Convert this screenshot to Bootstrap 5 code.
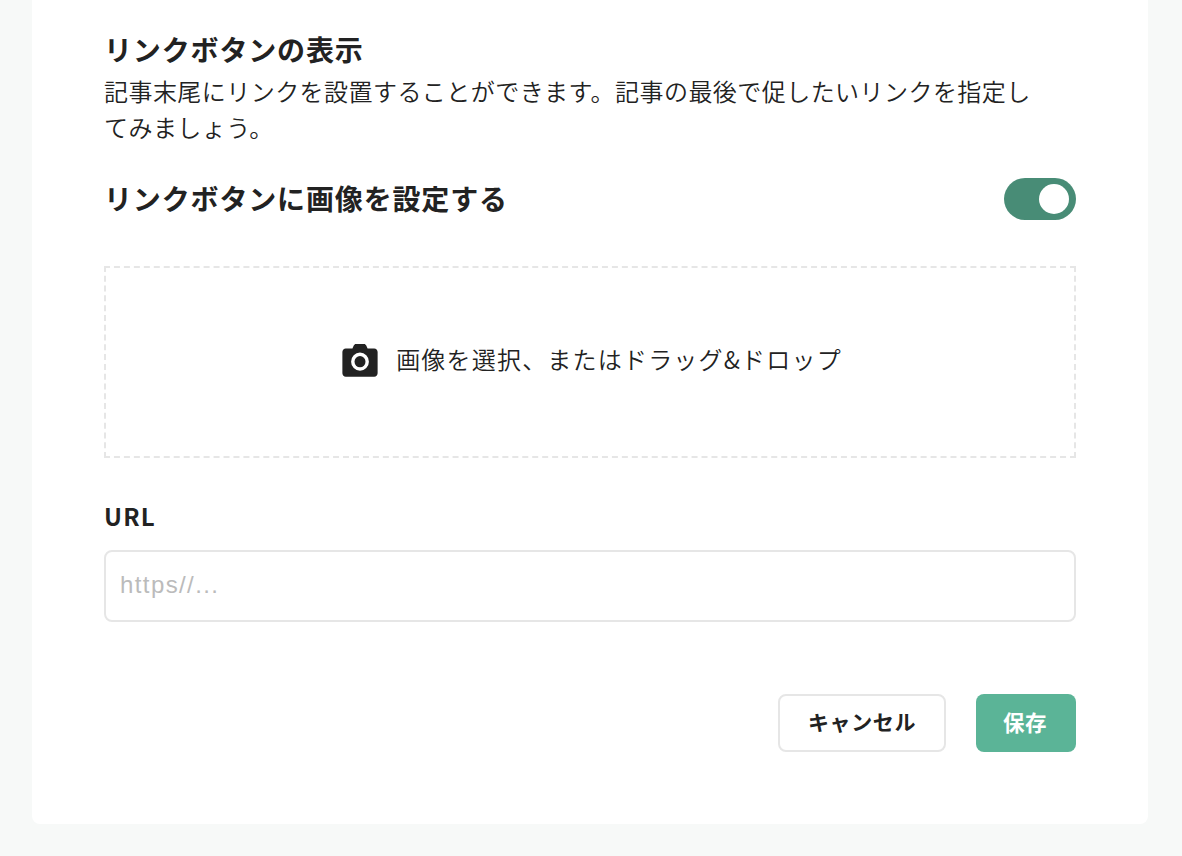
<!DOCTYPE html>
<html lang="ja">
<head>
<meta charset="utf-8">
<title>リンクボタンの表示</title>
<link href="https://cdn.jsdelivr.net/npm/bootstrap@5.3.0/dist/css/bootstrap.min.css" rel="stylesheet">
<style>
html,body{height:100%;}
body{background:#f7f9f8;color:#222;font-family:"Noto Sans CJK JP","Noto Sans",sans-serif;overflow:hidden;}
.sheet{margin:0 34px 0 32px;padding:30px 72px 72px;background:#fff;border-radius:0 0 8px 8px;}
.sec-title{font-size:28px;line-height:38px;font-weight:700;letter-spacing:.85px;margin:0;}
.sec-desc{font-size:24px;line-height:36px;font-weight:350;letter-spacing:.45px;margin:5px 0 0;max-width:940px;}
.toggle-row{margin-top:33px;height:42px;}
.toggle-label{font-size:28px;line-height:40px;padding-bottom:2px;font-weight:700;letter-spacing:.85px;margin:0;}
.form-switch.toggle-wrap{padding:0;margin:0;min-height:0;display:flex;}
.form-switch.toggle-wrap .form-check-input,.form-switch.toggle-wrap .form-check-input:checked,.form-switch.toggle-wrap .form-check-input:focus{width:72px;height:42px;margin:0;border:0;border-radius:21px;background-color:#488c76;background-size:40px 40px;background-position:right 2px center;box-shadow:none;}
.drop-area{margin-top:46px;height:192px;padding:0 0 4px 4px;border:2px dashed #e6e6e6;font-size:24px;line-height:36px;font-weight:350;letter-spacing:1.2px;color:#222;}
.drop-icon{flex:none;margin-right:18px;}
.drop-text{padding-bottom:2px;}
.field-label{margin:43px 0 0;font-size:24px;line-height:30px;font-weight:700;letter-spacing:1.2px;display:block;}
.url-field.form-control{margin-top:19px;height:72px;border:2px solid #e6e6e6;border-radius:8px;padding:0 14px 2px;font-family:"Liberation Sans","Noto Sans CJK JP",sans-serif;font-size:24px;letter-spacing:1.4px;color:#222;box-shadow:none;}
.url-field.form-control::placeholder{color:#bbb;}
.actions{margin-top:72px;gap:30px;}
.btn.act{height:58px;border-radius:8px;font-size:21px;font-weight:700;display:flex;align-items:center;justify-content:center;padding:0 0 2px;letter-spacing:.6px;}
.btn.act-cancel{width:168px;background:#fff;border:2px solid #e6e6e6;color:#222;}
.btn.act-save{width:100px;padding-right:2px;background:#5bb497;border:0;color:#fff;font-size:21.5px;letter-spacing:.4px;}
</style>
</head>
<body>
<div class="sheet">
  <h2 class="sec-title">リンクボタンの表示</h2>
  <p class="sec-desc">記事末尾にリンクを設置することができます。記事の最後で促したいリンクを指定してみましょう。</p>
  <div class="toggle-row d-flex justify-content-between align-items-center">
    <label class="toggle-label" for="sw">リンクボタンに画像を設定する</label>
    <div class="form-check form-switch toggle-wrap"><input class="form-check-input" type="checkbox" role="switch" id="sw" checked></div>
  </div>
  <div class="drop-area d-flex align-items-center justify-content-center">
    <svg class="drop-icon" width="36" height="33" viewBox="0 0 38 34" preserveAspectRatio="none" aria-hidden="true"><path fill="#222" fill-rule="evenodd" d="M11 4.600 12.400 1.600C12.900.6 13.700 0 14.800 0h8.400c1.100 0 1.900.6 2.400 1.600L27 4.600h7c2 0 3.600 1.600 3.600 3.600v22c0 2-1.600 3.600-3.600 3.600H4c-2 0-3.600-1.600-3.600-3.600v-22C.4 6.200 2 4.600 4 4.600ZM19 8.800a9.400 9.400 0 1 0 0 18.800 9.400 9.400 0 0 0 0-18.800Z"/><circle cx="19" cy="18.200" r="5.800" fill="#222"/></svg>
    <span class="drop-text">画像を選択、またはドラッグ&amp;ドロップ</span>
  </div>
  <label class="field-label" for="url">URL</label>
  <input class="form-control url-field" id="url" type="text" placeholder="https//...">
  <div class="actions d-flex justify-content-end">
    <button type="button" class="btn act act-cancel">キャンセル</button>
    <button type="button" class="btn act act-save">保存</button>
  </div>
</div>
<script src="https://cdn.jsdelivr.net/npm/bootstrap@5.3.0/dist/js/bootstrap.bundle.min.js"></script>
</body>
</html>
